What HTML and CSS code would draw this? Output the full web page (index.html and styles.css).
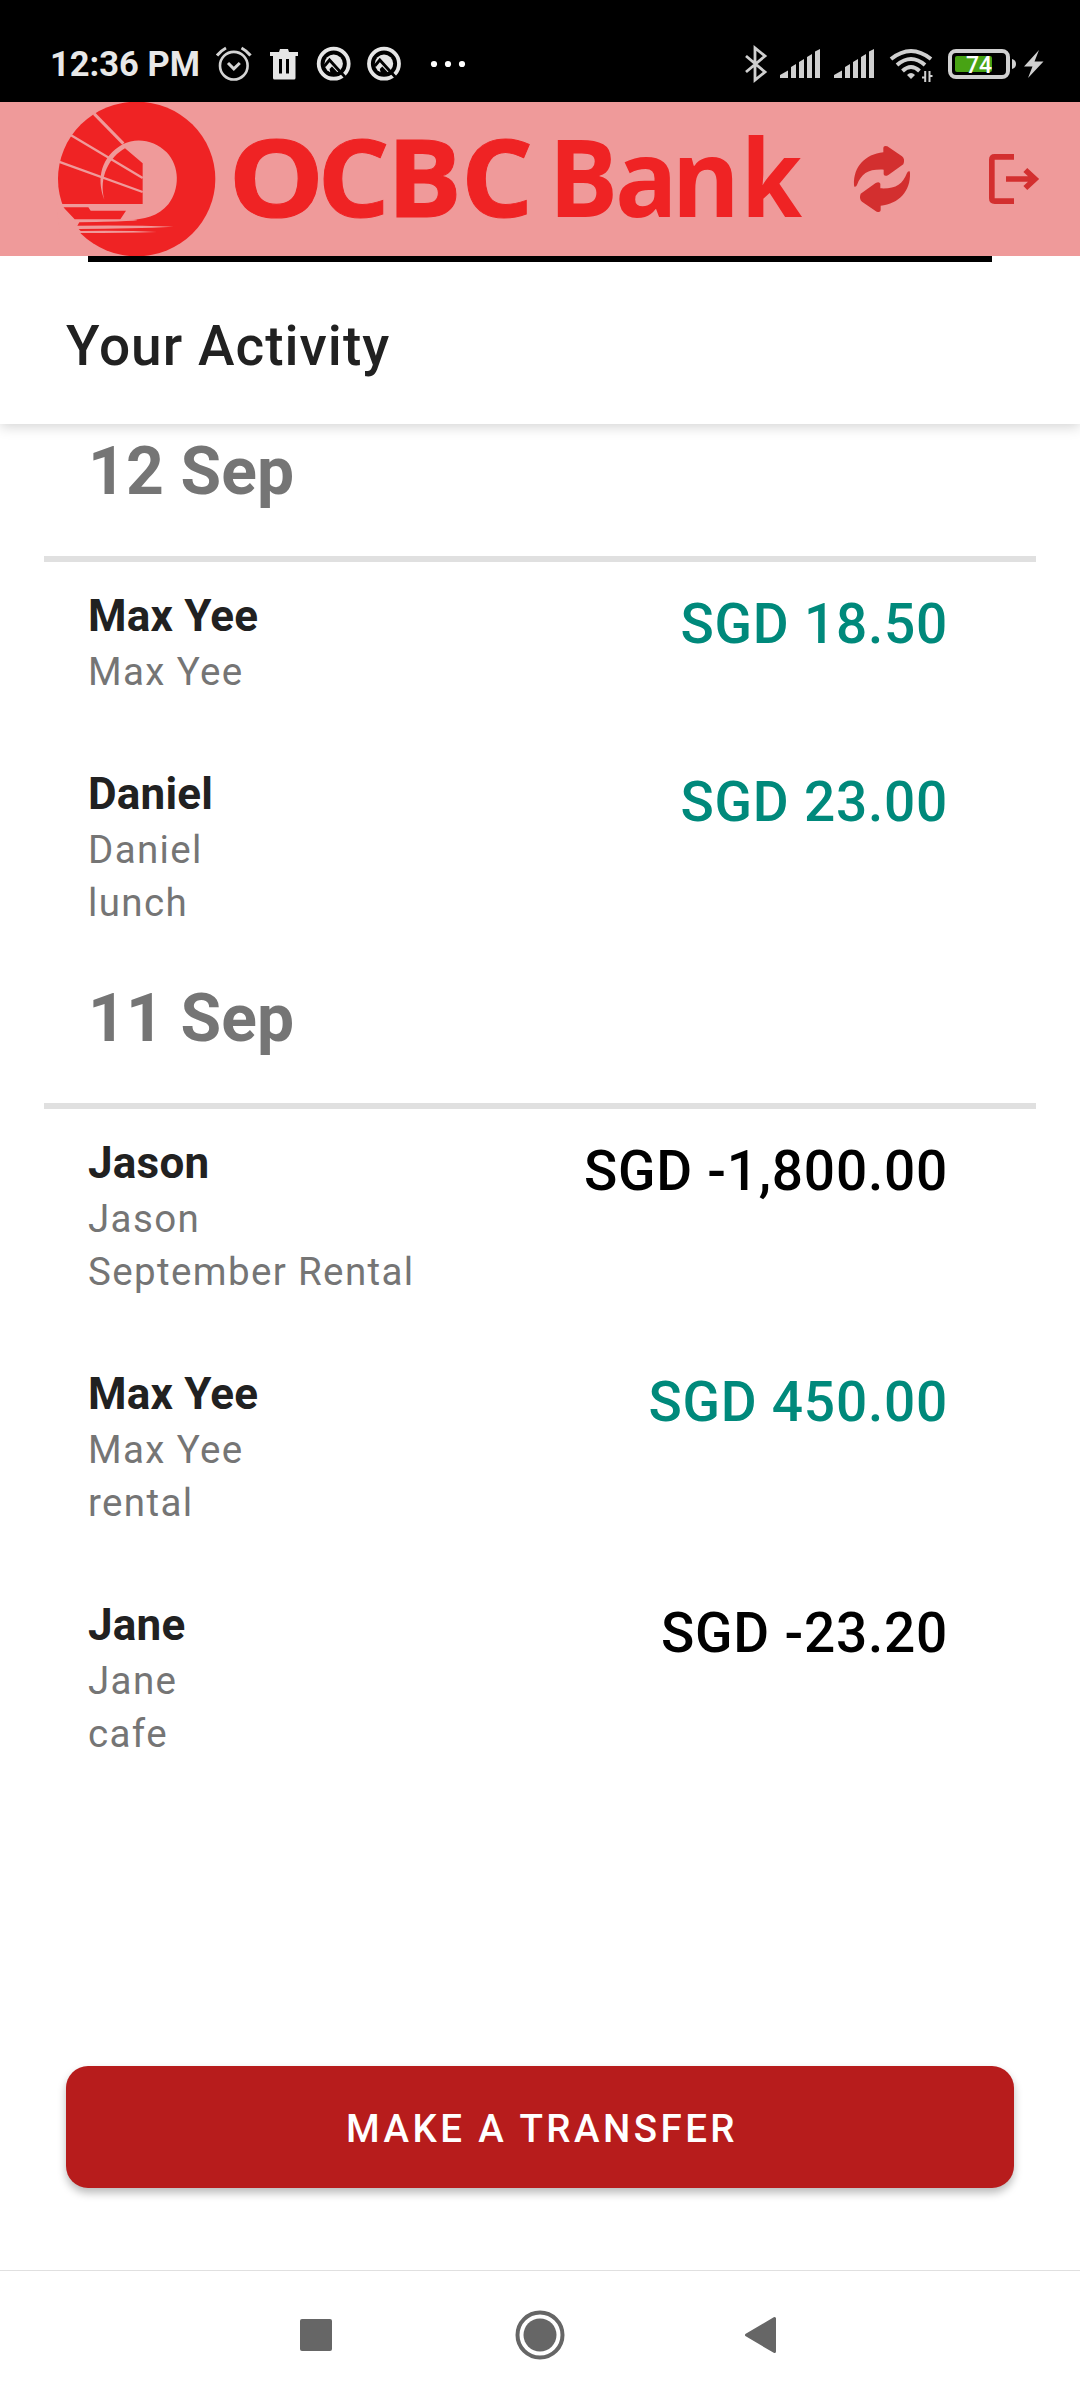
FILE: index.html
```html
<!DOCTYPE html>
<html lang="en">
<head>
<meta charset="utf-8">
<title>Your Activity</title>
<link rel="stylesheet" href="styles.css">
</head>
<body>
<div class="screen">
  <div class="status">
    <div class="status-left">
      <span class="clock">12:36 PM</span>
      <svg class="icons-left" width="260" height="40" viewBox="210 44 260 40">
        <g fill="none" stroke="#d4d4d4" stroke-width="2.6">
          <circle cx="233.8" cy="65.7" r="13.8"/>
          <path d="M228 63l5.8 5.8 6-5.8" stroke-width="3"/>
          <path d="M217 55.500q3.500-4.500 9-7.500M250.500 55.500q-3.500-4.500-9-7.500" stroke-width="3"/>
        </g>
        <path fill="#e6e6e6" fill-rule="evenodd" d="M270 52h9l1-3h8l1 3h9v4h-2.500v22q0 1.500-1.500 1.500h-19.500q-1.500 0-1.500-1.500v-22H270zM279 59v14.500h3V59zM286 59v14.500h3V59z"/>
        <g id="tracker">
          <circle cx="333.700" cy="63.700" r="15" fill="none" stroke="#e6e6e6" stroke-width="3.800"/>
          <circle cx="333.700" cy="63.700" r="9.200" fill="#e6e6e6"/>
          <path d="M324.500 66l5-6 15.500 17" fill="none" stroke="#000" stroke-width="2.800"/>
          <path d="M329.500 69l2.500-2.500 8 8.500h-9z" fill="#000"/>
        </g>
        <use href="#tracker" x="50.300"/>
        <g fill="#fff"><circle cx="434" cy="64" r="3.100"/><circle cx="448" cy="64" r="3.100"/><circle cx="462" cy="64" r="3.100"/></g>
      </svg>
    </div>
    <svg class="icons-right" width="304" height="40" viewBox="742 44 304 40">
      <path d="M746 56l19 16-10 8V48l10 8-19 16" fill="none" stroke="#d0d0d0" stroke-width="2.800"/>
      <g id="signal" fill="#d0d0d0">
        <path d="M780 78v-3l8-4.500V78zM791 78V67l5-3v14zM799 78V62l5-3v19zM807 78V57l5-3v24zM815 78V51.500l5-2.500v29z"/>
      </g>
      <use href="#signal" x="54"/>
      <g fill="none" stroke="#d0d0d0" stroke-width="4">
        <path d="M891 59q20-16 40 0"/>
        <path d="M897 65q14-12 28 0"/>
        <path d="M902.500 71q8.500-8 17 0"/>
      </g>
      <path d="M911 79l-4-4q4-4 8 0z" fill="#d0d0d0"/>
      <path d="M922 77.500h3.200V72M925.200 71v11M929.500 82V71M929.500 76h3" stroke="#d0d0d0" stroke-width="2" fill="none"/>
      <rect x="950" y="51" width="58" height="26" rx="6" fill="none" stroke="#d0d0d0" stroke-width="4"/>
      <path d="M1012 59q4 1 4 5t-4 5z" fill="#d0d0d0"/>
      <rect x="955" y="56" width="37" height="16" rx="2" fill="#48a314"/>
      <text x="966" y="72.500" class="battery-text">74</text>
      <path d="M1039 50l-15 16.500h8.500L1028 78l15.500-16.500h-9z" fill="#d0d0d0"/>
    </svg>
  </div>

  <header class="appbar">
    <svg class="logo" width="790" height="154" viewBox="0 7 790 154" role="img" aria-label="OCBC Bank">
      <g transform="scale(.33333)">
        <ellipse cx="290" cy="252" rx="236" ry="232" fill="#ef2324"/>
        <path fill="#ef9a9a" d="M248 148C290 126 345 136 380 172C420 215 420 282 385 328C350 370 295 378 240 374L258 347H152L145 337H50V327H308V205L255 160C210 185 175 245 193 314C168 250 184 185 248 148Z"/>
        <path fill="#ef9a9a" d="M50 337H70L104 373H280Q340 378 118 382L112 392Q280 390 400 395Q280 401 116 402L122 408Q260 406 350 411Q250 414 126 414L60 414Z"/>
        <path d="M162 56L250 146" stroke="#ef9a9a" stroke-width="9"/>
        <path d="M92 120L308 249M56 200L308 291" stroke="#ef9a9a" stroke-width="7"/>
      </g>
      <text class="wordmark" transform="translate(188.300 122) scale(1.130 1)">O</text>
      <text class="wordmark" transform="translate(277.500 122) scale(1.060 1)">C</text>
      <text class="wordmark" transform="translate(347 122) scale(1.040 1)">B</text>
      <text class="wordmark" transform="translate(421 122) scale(1.060 1)">C</text>
      <text class="wordmark wordmark-plain" transform="translate(508.500 122) scale(.970 1)" x="0 68.500 127">Ban</text>
      <text class="wordmark wordmark-plain" transform="translate(701 122) scale(.920 1)">k</text>
    </svg>
    <svg class="action" width="58" height="68" viewBox="99 150 174 204">
      <path id="arrow" fill="#d32f2f" d="M102 270C100 215 135 178 190 172V158Q191 150 202 154L246 184Q256 192 250 208L205 240Q194 246 191 238V224C145 222 125 235 111 270Q108 277 103 275Z"/>
      <use href="#arrow" transform="rotate(180 186 252)"/>
    </svg>
    <svg class="action action-exit" width="52" height="52" viewBox="504 174 156 156">
      <g fill="none" stroke="#d32f2f" stroke-width="17">
        <path d="M582 185.500H524Q515.500 185.500 515.500 194V310Q515.500 318.500 524 318.500H582M558 252H642M616 225L645 252L616 279"/>
      </g>
    </svg>
  </header>

  <div class="underline"></div>
  <h1 class="title">Your Activity</h1>

  <main class="list">
    <section>
      <h2 class="date">12 Sep</h2>
      <article class="item">
        <div><h3 class="name">Max Yee</h3><p class="sub">Max Yee</p></div>
        <span class="amount in">SGD 18.50</span>
      </article>
      <article class="item">
        <div><h3 class="name">Daniel</h3><p class="sub">Daniel</p><p class="sub">lunch</p></div>
        <span class="amount in">SGD 23.00</span>
      </article>
    </section>
    <section>
      <h2 class="date">11 Sep</h2>
      <article class="item">
        <div><h3 class="name">Jason</h3><p class="sub">Jason</p><p class="sub">September Rental</p></div>
        <span class="amount">SGD -1,800.00</span>
      </article>
      <article class="item">
        <div><h3 class="name">Max Yee</h3><p class="sub">Max Yee</p><p class="sub">rental</p></div>
        <span class="amount in">SGD 450.00</span>
      </article>
      <article class="item">
        <div><h3 class="name">Jane</h3><p class="sub">Jane</p><p class="sub">cafe</p></div>
        <span class="amount">SGD -23.20</span>
      </article>
    </section>
  </main>

  <button class="transfer">MAKE A TRANSFER</button>

  <nav class="navbar">
    <svg width="50" height="50" viewBox="0 0 50 50"><rect x="8" y="9" width="32" height="32" rx="2" fill="#666"/></svg>
    <svg width="50" height="50" viewBox="0 0 50 50"><circle cx="25" cy="25" r="22.500" fill="none" stroke="#666" stroke-width="4"/><circle cx="25" cy="25" r="16.500" fill="#666"/></svg>
    <svg width="50" height="50" viewBox="0 0 50 50"><path d="M8.500 25L36.500 8.500V41.500Z" fill="#666" stroke="#666" stroke-width="3" stroke-linejoin="round"/></svg>
  </nav>
</div>
</body>
</html>
```
FILE: styles.css
```css
* { box-sizing: border-box; margin: 0; padding: 0; }
body { background: #fff; font-family: Roboto, sans-serif; color: #212121; }
svg { display: block; flex: none; }

.screen { width: 1080px; height: 2400px; display: flex; flex-direction: column; overflow: hidden; }

.status {
  height: 102px; flex: none; background: #000;
  display: flex; justify-content: space-between; align-items: flex-start;
  padding: 44px 34px 0 50px;
}
.status-left { display: flex; }
.clock {
  width: 160px; font-size: 34.5px; font-weight: 700; line-height: 41px; color: #e8e8e8;
  white-space: nowrap;
}
.battery-text { font: 500 23px Roboto, sans-serif; fill: #fff; }

.appbar {
  height: 154px; flex: none; background: #ef9a9a;
  display: flex; align-items: center; padding-left: 40px;
}
.action { margin-left: 23px; }
.action-exit { margin-left: 77px; }
.wordmark { font: 700 107px "Open Sans", sans-serif; fill: #ef2324; stroke: #ef2324; stroke-width: 1; }
.wordmark-plain { stroke: none; }

.underline { height: 6px; flex: none; margin: 0 88px; background: #000; }

.title {
  height: 162px; flex: none; padding: 52px 66px 0;
  font-size: 55px; font-weight: 500; line-height: 64px; letter-spacing: 1.03px;
  box-shadow: 0 3px 12px rgba(0, 0, 0, .17);
  clip-path: inset(0 0 -20px 0);
}

.list { height: 1642px; flex: none; }
.date {
  height: 138px; margin: 0 44px; padding: 9px 44px 0;
  border-bottom: 6px solid #e0e0e0;
  font-size: 66px; font-weight: 700; line-height: 78px; letter-spacing: .1px; color: #757575;
}
.item { display: flex; justify-content: space-between; padding: 28px 132px 42px 88px; }
.name { font-size: 44px; font-weight: 700; line-height: 52px; letter-spacing: .22px; margin-bottom: 3px; }
.sub { font-size: 38.5px; line-height: 53px; letter-spacing: 1.37px; color: #757575; }
.amount {
  margin-top: 2px; font-size: 55px; font-weight: 500; line-height: 64px;
  letter-spacing: .76px; color: #000;
}
.in { color: #00897b; }

.transfer {
  height: 122px; flex: none; margin: 0 66px 82px; padding: 2px 0 0 4px; border: 0; border-radius: 22px;
  background: #b71c1c; color: #fff;
  font: 500 38.5px/45px Roboto, sans-serif; letter-spacing: .0892857em;
  box-shadow: 0 5px 8px rgba(0, 0, 0, .27);
}

.navbar {
  height: 130px; border-top: 1px solid #e0e0e0; padding-bottom: 1px;
  display: flex; justify-content: center; align-items: center; gap: 173px;
}
```
